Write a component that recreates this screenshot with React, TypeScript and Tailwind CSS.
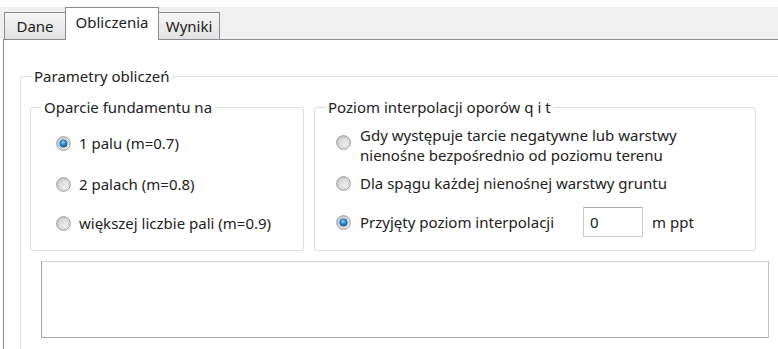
import { useId } from 'react';

function Radio({ checked }: { checked?: boolean }) {
  const id = useId().replace(/:/g, '');
  return (
    <svg width="15" height="15" viewBox="0 0 15 15" className="shrink-0">
      <defs>
        <linearGradient id={`o${id}`} x1="0" y1="0" x2="1" y2="1">
          <stop offset="0" stopColor="#c9c9c9" />
          <stop offset="1" stopColor="#fafafa" />
        </linearGradient>
        <linearGradient id={`i${id}`} x1="0" y1="0" x2="1" y2="1">
          <stop offset="0" stopColor="#d0d0d0" />
          <stop offset="1" stopColor="#f7f7f7" />
        </linearGradient>
        <radialGradient id={`c${id}`} cx="0.45" cy="0.35" r="0.65">
          <stop offset="0" stopColor="#8fd3fb" />
          <stop offset="0.55" stopColor="#2a86cf" />
          <stop offset="1" stopColor="#0d4f92" />
        </radialGradient>
      </defs>
      <circle cx="7.5" cy="7.5" r="6.8" fill={`url(#o${id})`} stroke="#8b8b8b" strokeWidth="0.9" />
      <circle cx="7.5" cy="7.5" r="5" fill={`url(#i${id})`} stroke="#bdbdbd" strokeWidth="0.5" />
      {checked && <circle cx="7.5" cy="7.5" r="3.8" fill={`url(#c${id})`} stroke="#1b4f86" strokeWidth="0.4" />}
    </svg>
  );
}

export default function App() {
  return (
    <div className="h-[349px] w-[778px] overflow-hidden bg-white pt-[7px] font-['Noto_Sans',sans-serif] text-[15px] text-[#222]">
      {/* tab strip */}
      <div className="flex h-[32px] items-end bg-[#f0f0f0] pl-[4px]">
        <div className="flex h-[27px] w-[61px] items-center justify-center border-l border-t border-[#898c95] bg-linear-to-b from-[#f6f6f6] to-[#e3e3e3]">
          Dane
        </div>
        <div className="relative z-10 -mb-px flex h-[33px] w-[94px] items-center justify-center border-x border-t border-[#898c95] bg-white pb-[3px]">
          Obliczenia
        </div>
        <div className="flex h-[27px] w-[61px] items-center justify-center border-r border-t border-[#898c95] bg-linear-to-b from-[#f6f6f6] to-[#e3e3e3]">
          Wyniki
        </div>
      </div>

      {/* tab panel */}
      <div className="ml-[3px] h-[320px] border-l border-t border-[#898c95] bg-white pl-[16px] pt-[27px]">
        <fieldset className="w-[820px] rounded-[3px] border border-[#d5dfe5] pb-[30px] pl-[9px]">
          <legend className="ml-[1px] px-[3px] leading-[18px]">Parametry obliczeń</legend>

          <div className="flex gap-[10px] pt-[13px]">
            <fieldset className="h-[153px] w-[274px] rounded-[3px] border border-[#d5dfe5] pl-[10px]">
              <legend className="px-[3px] leading-[18px]">Oparcie fundamentu na</legend>
              <div className="ml-[15px] mt-[18px] flex h-[18px] items-center gap-[8px]">
                <Radio checked />
                <span>1 palu (m=0.7)</span>
              </div>
              <div className="ml-[15px] mt-[23px] flex h-[18px] items-center gap-[8px]">
                <Radio />
                <span>2 palach (m=0.8)</span>
              </div>
              <div className="ml-[15px] mt-[21px] flex h-[18px] items-center gap-[8px]">
                <Radio />
                <span>większej liczbie pali (m=0.9)</span>
              </div>
            </fieldset>

            <fieldset className="h-[153px] w-[442px] rounded-[3px] border border-[#d5dfe5] pl-[10px]">
              <legend className="px-[3px] leading-[18px]">Poziom interpolacji oporów q i t</legend>
              <div className="ml-[11px] mt-[9px] flex items-start gap-[9px]">
                <div className="mt-[10px]">
                  <Radio />
                </div>
                <span className="leading-[20px]">
                  Gdy występuje tarcie negatywne lub warstwy
                  <br />
                  nienośne bezpośrednio od poziomu terenu
                </span>
              </div>
              <div className="ml-[11px] mt-[9px] flex h-[18px] items-center gap-[9px]">
                <Radio />
                <span>Dla spągu każdej nienośnej warstwy gruntu</span>
              </div>
              <div className="ml-[11px] mt-[15px] flex h-[30px] items-center gap-[9px]">
                <Radio checked />
                <span className="w-[214px]">Przyjęty poziom interpolacji</span>
                <div className="flex h-[30px] w-[60px] items-center border border-[#c9ccd2] border-t-[#abadb3] pl-[6px]">
                  0
                </div>
                <span>m ppt</span>
              </div>
            </fieldset>
          </div>

          <div className="ml-[11px] mt-[10px] h-[77px] w-[728px] border border-[#a9a9a9] border-t-[#d0d0d0] border-r-[#c4c4c4]" />
        </fieldset>
      </div>
    </div>
  );
}
